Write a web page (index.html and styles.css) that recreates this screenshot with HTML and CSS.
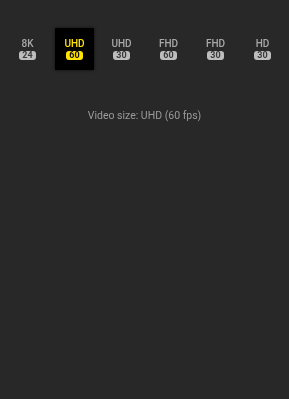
FILE: index.html
```html
<!DOCTYPE html>
<html>
<head>
<meta charset="utf-8">
<link rel="stylesheet" href="styles.css">
</head>
<body>
<div class="screen">
  <div class="modes">
    <div class="mode"><span class="label">8K</span><span class="badge">24</span></div>
    <div class="mode active"><span class="label">UHD</span><span class="badge">60</span></div>
    <div class="mode"><span class="label">UHD</span><span class="badge">30</span></div>
    <div class="mode"><span class="label">FHD</span><span class="badge">60</span></div>
    <div class="mode"><span class="label">FHD</span><span class="badge">30</span></div>
    <div class="mode"><span class="label">HD</span><span class="badge">30</span></div>
  </div>
  <div class="caption">Video size: UHD (60 fps)</div>
</div>
</body>
</html>
```
FILE: styles.css
```css
html, body {
  margin: 0;
  padding: 0;
  background: #282828;
}
.screen {
  width: 289px;
  height: 399px;
  background: #282828;
  font-family: Roboto, "Liberation Sans", sans-serif;
  filter: blur(0.5px);
}
.modes {
  display: grid;
  grid-template-columns: repeat(6, 47px);
  padding: 28px 0 0 4px;
}
.mode {
  height: 42px;
  display: flex;
  flex-direction: column;
  align-items: center;
  justify-content: center;
  gap: 2px;
  color: #a8a8a8;
}
.mode.active {
  background: #000;
  width: 39px;
  justify-self: center;
  color: #ffe400;
  box-shadow: 0 0 3px rgba(0,0,0,0.6);
}
.label {
  font-size: 10px;
  font-weight: 500;
  line-height: 10px;
}
.badge {
  font-size: 9px;
  font-weight: 700;
  line-height: 9px;
  padding: 0 3px;
  border-radius: 3px;
  background: #bdbdbd;
  color: #3a3a3a;
}
.mode.active .badge {
  background: #ffe400;
  color: #111;
}
.caption {
  margin-top: 39px;
  text-align: center;
  font-size: 10.5px;
  color: #9a9a9a;
}
```
